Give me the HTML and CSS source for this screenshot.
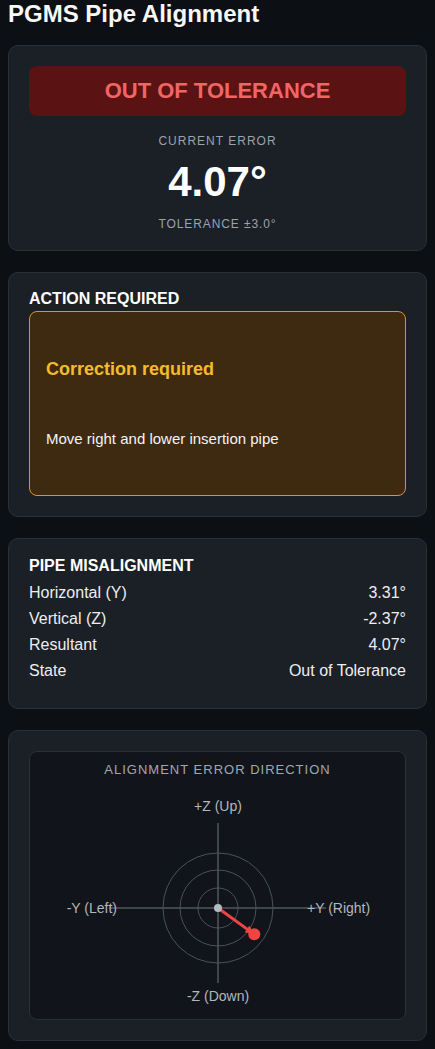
FILE: index.html
```html
<!DOCTYPE html>
<html lang="en">
<head>
<meta charset="utf-8">
<title>PGMS Pipe Alignment</title>
<link rel="stylesheet" href="styles.css">
</head>
<body>
<h1 class="page-title">PGMS Pipe Alignment</h1>

<section class="card card-status">
  <div class="status-banner">OUT OF TOLERANCE</div>
  <div class="metric-label">CURRENT ERROR</div>
  <div class="metric-value">4.07°</div>
  <div class="metric-sub">TOLERANCE ±3.0°</div>
</section>

<section class="card card-action">
  <h2 class="card-title">ACTION REQUIRED</h2>
  <div class="action-box">
    <h3 class="action-heading">Correction required</h3>
    <p class="action-text">Move right and lower insertion pipe</p>
  </div>
</section>

<section class="card card-data">
  <h2 class="card-title">PIPE MISALIGNMENT</h2>
  <div class="row"><span>Horizontal (Y)</span><span>3.31°</span></div>
  <div class="row"><span>Vertical (Z)</span><span>-2.37°</span></div>
  <div class="row"><span>Resultant</span><span>4.07°</span></div>
  <div class="row"><span>State</span><span>Out of Tolerance</span></div>
</section>

<section class="card card-chart">
  <div class="chart-panel">
    <div class="chart-title">ALIGNMENT ERROR DIRECTION</div>
    <svg class="chart" viewBox="0 0 376 241" width="376" height="241">
      <g stroke="#4b5059" fill="none" stroke-width="1">
        <circle cx="188" cy="130" r="20"/>
        <circle cx="188" cy="130" r="38"/>
        <circle cx="188" cy="130" r="55"/>
      </g>
      <g stroke="#50555e" stroke-width="1.5">
        <line x1="79" y1="130" x2="296" y2="130"/>
        <line x1="188" y1="45" x2="188" y2="205"/>
      </g>
      <g class="axis-label" fill="#b3b7be">
        <text x="188" y="32.5" text-anchor="middle">+Z (Up)</text>
        <text x="188" y="222.5" text-anchor="middle">-Z (Down)</text>
        <text x="87" y="135" text-anchor="end">-Y (Left)</text>
        <text x="277" y="135" text-anchor="start">+Y (Right)</text>
      </g>
      <line x1="188" y1="130" x2="222" y2="154.6" stroke="#ef4444" stroke-width="3"/>
      <polygon points="224.3,156.3 214.7,154.2 219.4,147.8" fill="#ef4444"/>
      <circle cx="224.3" cy="156.3" r="6" fill="#ef4444"/>
      <circle cx="188" cy="130" r="4" fill="#b6bac1"/>
    </svg>
  </div>
</section>
</body>
</html>
```
FILE: styles.css
```css
html, body {
  background: #0c0f14;
}
body {
  margin: 0 8px;
  font-family: "Liberation Sans", Arial, sans-serif;
  color: #f3f4f6;
}
.page-title {
  margin: 0 0 17px;
  font-size: 24px;
  line-height: 28px;
  font-weight: bold;
  color: #f7f7f7;
}
.card {
  background: #1b1f26;
  border: 1px solid #2b3038;
  border-radius: 10px;
  padding: 20px;
  margin-bottom: 21px;
}
.card-status {
  text-align: center;
  padding-bottom: 18px;
}
.status-banner {
  height: 50px;
  line-height: 50px;
  border-radius: 8px;
  background: #5b1212;
  color: #f26565;
  font-size: 22px;
  font-weight: bold;
}
.metric-label {
  margin-top: 18px;
  font-size: 12px;
  line-height: 15px;
  letter-spacing: 1px;
  color: #9ca3ab;
}
.metric-value {
  margin-top: 9px;
  font-size: 42px;
  line-height: 48px;
  font-weight: bold;
  color: #ffffff;
}
.metric-sub {
  margin-top: 11px;
  font-size: 12px;
  line-height: 15px;
  letter-spacing: 0.9px;
  color: #9ca3ab;
}
.card-title {
  margin: 0 0 3px;
  font-size: 16px;
  line-height: 18px;
  font-weight: bold;
  color: #ffffff;
}
.card-action {
  padding-top: 17px;
}
.action-box {
  background: #3d2a11;
  border: 1px solid #d9952a;
  border-radius: 8px;
  padding: 16px;
}
.action-heading {
  margin: 31px 0 0;
  font-size: 18px;
  line-height: 21px;
  font-weight: bold;
  color: #f6bb2c;
}
.action-text {
  margin: 50px 0 32px;
  font-size: 15px;
  line-height: 17px;
  color: #f3f4f6;
}
.card-data {
  padding-top: 18px;
  padding-bottom: 24px;
}
.card-data .card-title {
  margin-bottom: 5px;
}
.row {
  display: flex;
  justify-content: space-between;
  padding: 4px 0;
  font-size: 16px;
  line-height: 18px;
  color: #eceef1;
}
.card-chart {
  margin-bottom: 8px;
}
.chart-panel {
  background: #11151b;
  border: 1px solid #2b3038;
  border-radius: 8px;
  padding-top: 10px;
}
.chart-title {
  text-align: center;
  font-size: 13px;
  line-height: 16px;
  letter-spacing: 1px;
  color: #a2a7ae;
}
.chart {
  display: block;
  width: 376px;
  height: 241px;
}
.axis-label {
  font-family: "Liberation Sans", Arial, sans-serif;
  font-size: 14px;
}
```
